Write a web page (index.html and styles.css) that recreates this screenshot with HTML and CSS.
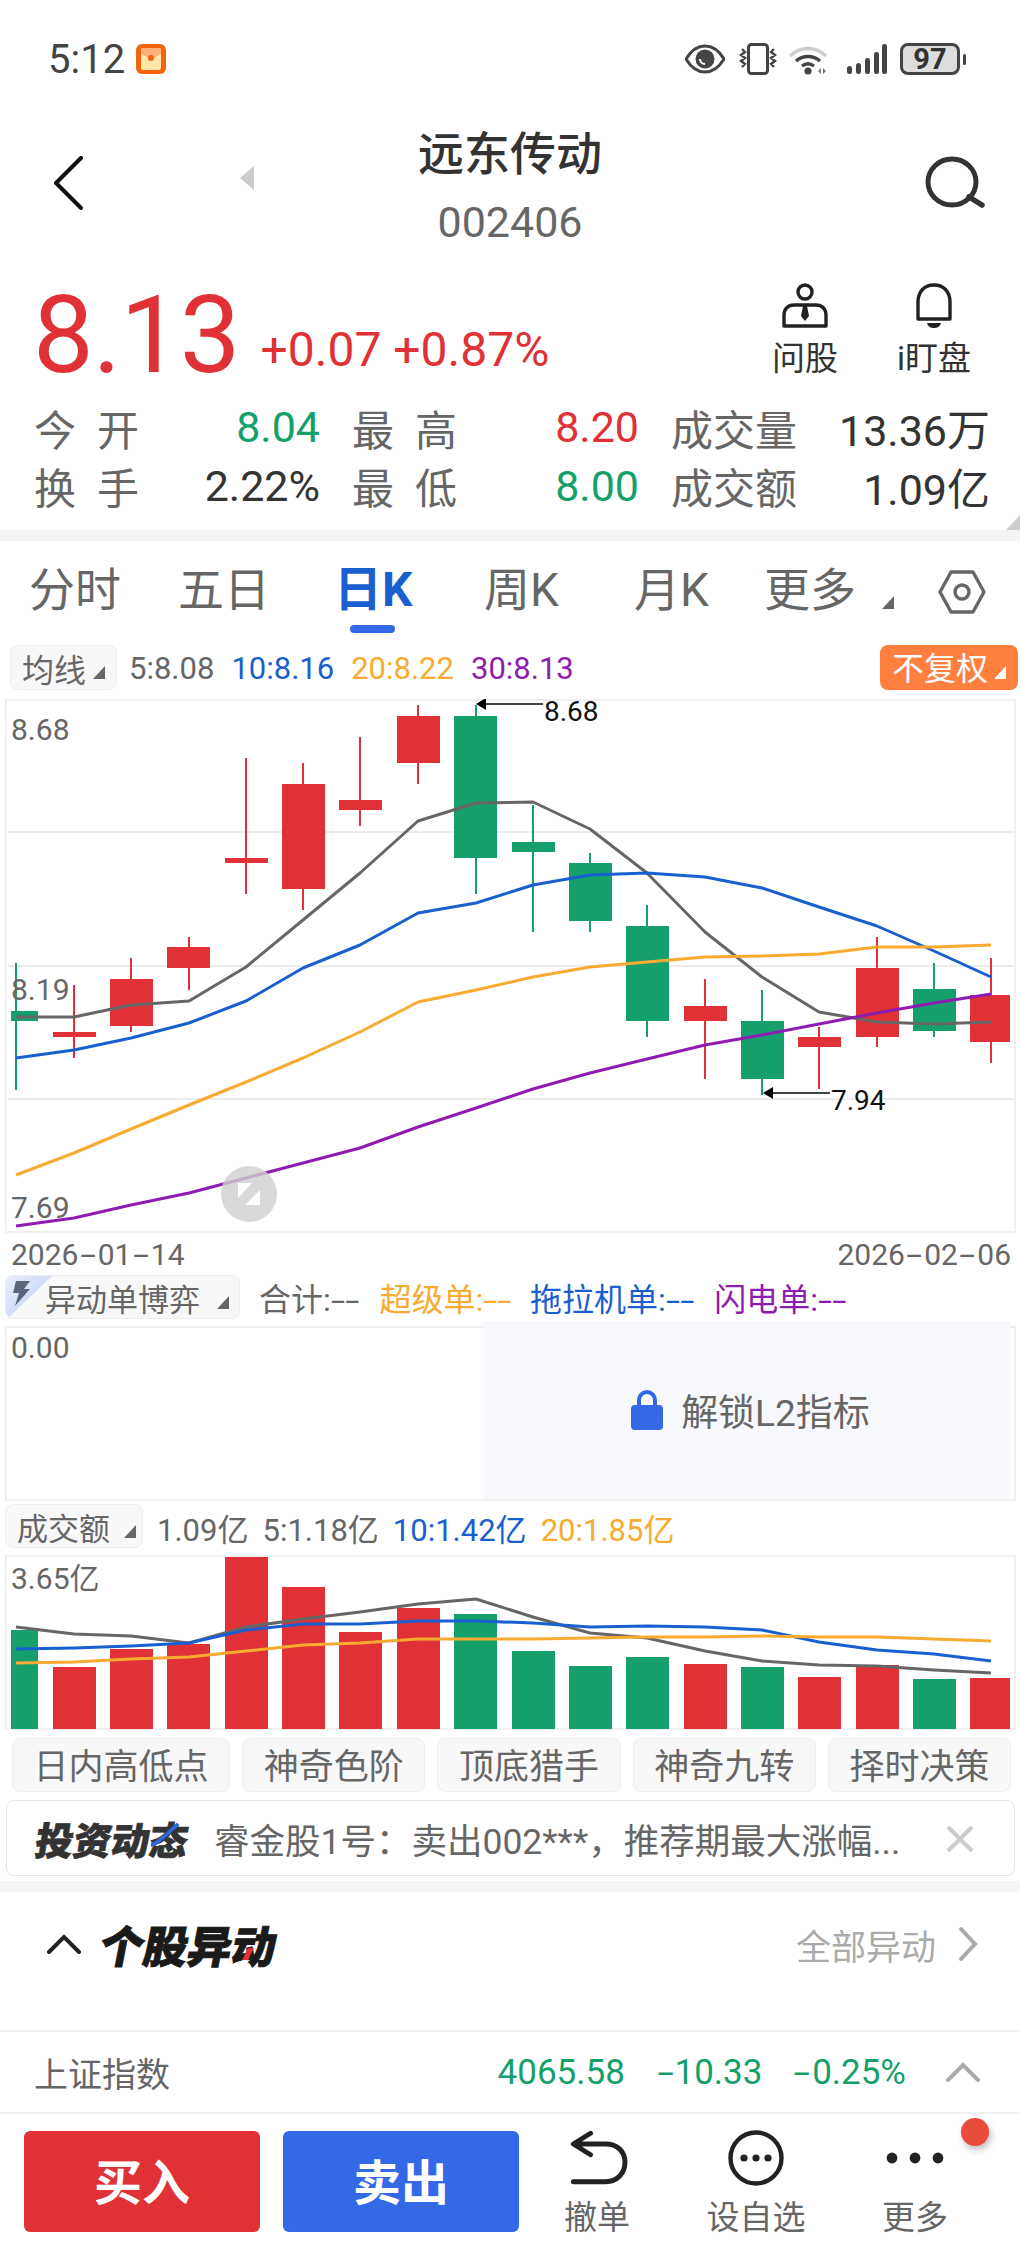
FILE: index.html
```html
<!DOCTYPE html>
<html lang="zh-CN">
<head>
<meta charset="utf-8">
<title>远东传动</title>
<link rel="stylesheet" href="styles.css">
</head>
<body>
<div class="page">
  <div class="status">
    <div class="status-left">
      <span class="clock">5:12</span>
      <svg class="envelope" viewBox="0 0 30 30"><rect width="30" height="30" rx="6" fill="#f7630c"/><rect x="5" y="4" width="20" height="22" rx="2" fill="#ffe6a8"/><path d="M5 10c5 2 8 5 10 5s5-3 10-5V6a2 2 0 0 0-2-2H7a2 2 0 0 0-2 2z" fill="#fbb27a"/><circle cx="15" cy="14" r="3" fill="#f7630c"/></svg>
    </div>
    <div class="status-right">
      <svg class="ic-eye" viewBox="0 0 40 30"><path d="M1 15C7 5 13 2 20 2s13 3 19 13c-6 10-12 13-19 13S7 25 1 15z" fill="none" stroke="#444" stroke-width="3"/><circle cx="20" cy="15" r="9.5" fill="#444"/><path d="M15 15a5 5 0 0 0 5 5" fill="none" stroke="#fff" stroke-width="2.2"/></svg>
      <svg class="ic-vib" viewBox="0 0 40 32"><rect x="10.5" y="1.5" width="19" height="29" rx="3" fill="none" stroke="#444" stroke-width="3"/><path d="M4 6l3 3-4 3 4 3-4 3 4 3-3 3M36 6l-3 3 4 3-4 3 4 3-4 3 3 3" fill="none" stroke="#444" stroke-width="2.4"/></svg>
      <svg class="ic-wifi" viewBox="0 0 40 32"><path d="M2 13C12 3 28 3 38 13" fill="none" stroke="#ccc" stroke-width="3.4"/><path d="M8 18c7-6 17-6 24 0M14 23c4-3 8-3 12 0" fill="none" stroke="#444" stroke-width="3.4"/><circle cx="20" cy="28" r="3.6" fill="#444"/><path d="M33 25l-3 3 3 3zM35 25l3 3-3 3z" fill="#777"/></svg>
      <svg class="ic-sig" viewBox="0 0 40 32"><rect x="0" y="23" width="5" height="8" rx="2.5" fill="#444"/><rect x="9" y="20" width="5" height="11" rx="2.5" fill="#444"/><rect x="18" y="15" width="5" height="16" rx="2.5" fill="#444"/><rect x="27" y="9" width="5" height="22" rx="2.5" fill="#444"/><rect x="35" y="1" width="5" height="30" rx="2.5" fill="#444"/></svg>
      <div class="battery"><span class="battery-num">97</span></div><i class="battery-tip"></i>
    </div>
  </div>

  <div class="header">
    <div class="header-left">
      <svg class="ic-back" viewBox="0 0 30 54"><path d="M28 2L3 27l25 25" fill="none" stroke="#111" stroke-width="4" stroke-linecap="round" stroke-linejoin="round"/></svg>
      <i class="prev-arrow"></i>
    </div>
    <div class="header-mid">
      <div class="stock-name">远东传动</div>
      <div class="stock-code">002406</div>
    </div>
    <div class="header-right">
      <svg class="ic-search" viewBox="0 0 60 52"><ellipse cx="27" cy="26" rx="24" ry="23" fill="none" stroke="#333" stroke-width="5"/><path d="M44 41l13 8" stroke="#333" stroke-width="5.5" stroke-linecap="round"/></svg>
    </div>
  </div>

  <div class="quote">
    <div class="price">8.13</div>
    <div class="change">+0.07 +0.87%</div>
    <div class="actions">
      <div class="action">
        <svg class="ic-action" viewBox="0 0 46 46"><circle cx="23" cy="9" r="7" fill="none" stroke="#222" stroke-width="3.4"/><path d="M2 43V32c0-6 4-10 10-10h22c6 0 10 4 10 10v11z" fill="none" stroke="#222" stroke-width="3.4" stroke-linejoin="round"/><path d="M21 23h4l2 10-4 5-4-5z" fill="#222"/></svg>
        <span class="action-label">问股</span>
      </div>
      <div class="action">
        <svg class="ic-action" viewBox="0 0 46 46"><path d="M7 36V19C7 9 13 2 23 2s16 7 16 17v17z" fill="none" stroke="#222" stroke-width="3.4" stroke-linejoin="round"/><path d="M16 40h14c-1 4-4 5-7 5s-6-1-7-5z" fill="#222"/></svg>
        <span class="action-label">i盯盘</span>
      </div>
    </div>
  </div>

  <div class="stats">
    <div class="stat"><span class="stat-label wide">今开</span><span class="num-green">8.04</span></div>
    <div class="stat"><span class="stat-label wide">最高</span><span class="num-red">8.20</span></div>
    <div class="stat"><span class="stat-label">成交量</span><span class="num-dark">13.36万</span></div>
    <div class="stat"><span class="stat-label wide">换手</span><span class="num-dark">2.22%</span></div>
    <div class="stat"><span class="stat-label wide">最低</span><span class="num-green">8.00</span></div>
    <div class="stat"><span class="stat-label">成交额</span><span class="num-dark">1.09亿</span></div>
    <i class="corner-mark"></i>
  </div>
  <div class="gap-bar"></div>

  <div class="tabs">
    <span class="tab">分时</span>
    <span class="tab">五日</span>
    <span class="tab tab-active">日K</span>
    <span class="tab">周K</span>
    <span class="tab">月K</span>
    <span class="tab tab-more">更多<i class="tri tri-big"></i></span>
    <svg class="ic-hex" viewBox="0 0 48 44"><path d="M13 2h22l11 20-11 20H13L2 22z" fill="none" stroke="#666" stroke-width="3.4" stroke-linejoin="round"/><circle cx="24" cy="22" r="7" fill="none" stroke="#666" stroke-width="3.4"/></svg>
  </div>

  <div class="ma-row">
    <span class="chip chip-ma">均线<i class="tri"></i></span>
    <span class="ma-text c-grey">5:8.08</span>
    <span class="ma-text c-blue">10:8.16</span>
    <span class="ma-text c-orange">20:8.22</span>
    <span class="ma-text c-purple">30:8.13</span>
    <span class="fq">不复权<i class="tri tri-white"></i></span>
  </div>

  <div class="chart-box">
    <svg class="chart-svg" viewBox="5 699 1011 534">
      <g class="grid"><path d="M8 832H1014M8 966H1014M8 1099H1014"/></g>
      <g class="up">
        <path d="M74 985V1058M131 958V1032M189 937V990M246 758V894M303 763V910M360 737V826M418 705V784M705 979V1079M819 1027V1089M877 937V1047M991 958V1063"/>
        <rect x="53" y="1032" width="43" height="5"/><rect x="110" y="979" width="43" height="47"/><rect x="167" y="947" width="43" height="21"/><rect x="225" y="858" width="43" height="5"/><rect x="282" y="784" width="43" height="105"/><rect x="339" y="800" width="43" height="10"/><rect x="397" y="716" width="43" height="47"/><rect x="684" y="1006" width="43" height="15"/><rect x="798" y="1037" width="43" height="10"/><rect x="856" y="968" width="43" height="69"/><rect x="970" y="995" width="40" height="47"/>
      </g>
      <g class="down">
        <path d="M16 963V1090M476 705V894M533 805V932M590 853V932M647 905V1037M762 990V1095M934 963V1037"/>
        <rect x="11" y="1011" width="27" height="10"/><rect x="454" y="716" width="43" height="142"/><rect x="512" y="842" width="43" height="10"/><rect x="569" y="863" width="43" height="58"/><rect x="626" y="926" width="43" height="95"/><rect x="741" y="1021" width="43" height="58"/><rect x="913" y="989" width="43" height="42"/>
      </g>
      <polyline class="l-grey" points="16,1017 74,1017 131,1005 189,1001 246,967 303,920 360,873 418,821 476,803 533,802 590,829 647,873 705,932 762,977 819,1012 877,1022 934,1024 991,1022"/>
      <polyline class="l-blue" points="16,1058 74,1050 131,1038 189,1023 246,1001 303,968 360,945 418,913 476,903 533,885 590,875 647,873 705,877 762,888 819,907 877,926 934,951 991,977"/>
      <polyline class="l-orange" points="16,1175 74,1153 131,1129 189,1105 246,1082 303,1058 360,1032 418,1002 476,990 533,977 590,967 647,962 705,957 762,956 819,954 877,947 934,947 991,945"/>
      <polyline class="l-purple" points="16,1226 74,1218 131,1205 189,1193 246,1178 303,1163 360,1148 418,1127 476,1108 533,1089 590,1073 647,1059 705,1045 762,1035 819,1024 877,1013 934,1003 991,994"/>
      <path class="note-line" d="M480 704H543M767 1093H830"/>
      <path class="note-head" d="M476 704l10-6v12zM763 1093l10-6v12z"/>
      <circle class="pencil-bg" cx="249" cy="1194" r="28"/>
      <path class="pencil" d="M238 1183h14l-14 15zM260 1190v15h-15z"/>
    </svg>
    <span class="axis-label lbl-top">8.68</span>
    <span class="axis-label lbl-mid">8.19</span>
    <span class="axis-label lbl-bot">7.69</span>
    <span class="note note-hi">8.68</span>
    <span class="note note-lo">7.94</span>
  </div>

  <div class="dates">
    <span>2026<b class="dash">-</b>01<b class="dash">-</b>14</span>
    <span>2026<b class="dash">-</b>02<b class="dash">-</b>06</span>
  </div>

  <div class="l2-row">
    <span class="chip chip-l2">
      <svg class="l2-flash" viewBox="0 0 46 44"><defs><linearGradient id="flashFill" x1="0" y1="0" x2="1" y2="1"><stop offset="0" stop-color="#e8effc"/><stop offset="1" stop-color="#b9ccf2"/></linearGradient></defs><path d="M0 0h46L0 44z" fill="url(#flashFill)"/><path d="M10 5h14l-6 8h6L9 30l4-13H7z" fill="#5c6678"/></svg>
      异动单博弈<i class="tri"></i>
    </span>
    <span class="l2-text lt-1 c-grey">合计:<b class="dashes">--</b></span>
    <span class="l2-text lt-2 c-orange">超级单:<b class="dashes">--</b></span>
    <span class="l2-text lt-3 c-blue">拖拉机单:<b class="dashes">--</b></span>
    <span class="l2-text lt-4 c-purple">闪电单:<b class="dashes">--</b></span>
  </div>

  <div class="l2-box">
    <span class="axis-label lbl-l2">0.00</span>
    <div class="l2-lock">
      <svg class="ic-lock" viewBox="0 0 32 40"><path d="M8 18V10a8 8 0 0 1 16 0v8" fill="none" stroke="#3369e7" stroke-width="4"/><rect y="15" width="32" height="25" rx="4" fill="#3369e7"/></svg>
      <span>解锁L2指标</span>
    </div>
  </div>

  <div class="vol-row">
    <span class="chip chip-vol">成交额<i class="tri"></i></span>
    <span class="ma-text c-grey">1.09亿</span>
    <span class="ma-text c-grey">5:1.18亿</span>
    <span class="ma-text c-blue">10:1.42亿</span>
    <span class="ma-text c-orange">20:1.85亿</span>
  </div>

  <div class="vol-box">
    <svg class="vol-svg" viewBox="5 1555 1011 175">
      <g class="up">
        <rect x="53" y="1667" width="43" height="62"/><rect x="110" y="1649" width="43" height="80"/><rect x="167" y="1644" width="43" height="85"/><rect x="225" y="1557" width="43" height="172"/><rect x="282" y="1587" width="43" height="142"/><rect x="339" y="1632" width="43" height="97"/><rect x="397" y="1608" width="43" height="121"/><rect x="684" y="1664" width="43" height="65"/><rect x="798" y="1677" width="43" height="52"/><rect x="856" y="1665" width="43" height="64"/><rect x="970" y="1678" width="40" height="51"/>
      </g>
      <g class="down">
        <rect x="11" y="1630" width="27" height="99"/><rect x="454" y="1614" width="43" height="115"/><rect x="512" y="1651" width="43" height="78"/><rect x="569" y="1666" width="43" height="63"/><rect x="626" y="1657" width="43" height="72"/><rect x="741" y="1667" width="43" height="62"/><rect x="913" y="1679" width="43" height="50"/>
      </g>
      <polyline class="l-grey" points="16,1627 74,1634 131,1636 189,1643 246,1627 303,1619 360,1612 418,1604 476,1599 533,1617 590,1633 647,1638 705,1651 762,1661 819,1665 877,1666 934,1670 991,1673"/>
      <polyline class="l-blue" points="16,1649 74,1648 131,1646 189,1643 246,1630 303,1624 360,1624 418,1621 476,1621 533,1623 590,1627 647,1626 705,1627 762,1630 819,1642 877,1650 934,1654 991,1661"/>
      <polyline class="l-orange" points="16,1663 74,1662 131,1659 189,1657 246,1651 303,1645 360,1643 418,1639 476,1639 533,1639 590,1638 647,1637 705,1637 762,1636 819,1637 877,1637 934,1639 991,1641"/>
    </svg>
    <span class="axis-label lbl-vol">3.65亿</span>
  </div>

  <div class="tools">
    <span class="tool tool-wide">日内高低点</span>
    <span class="tool">神奇色阶</span>
    <span class="tool">顶底猎手</span>
    <span class="tool">神奇九转</span>
    <span class="tool">择时决策</span>
  </div>

  <div class="news">
    <span class="news-logo">投资动态<svg class="news-accent" viewBox="0 0 28 24"><path d="M2 22C10 20 16 10 26 1" fill="none" stroke="#2f66e0" stroke-width="4"/></svg></span>
    <span class="news-text">睿金股1号：卖出002***，推荐期最大涨幅...</span>
    <svg class="ic-close" viewBox="0 0 30 30"><path d="M3 3l24 24M27 3L3 27" stroke="#ccc" stroke-width="4"/></svg>
  </div>
  <div class="gap-bar gap-bar-2"></div>

  <div class="section">
    <svg class="ic-up-dark" viewBox="0 0 34 20"><path d="M2 18L17 3l15 15" fill="none" stroke="#222" stroke-width="4" stroke-linecap="round"/></svg>
    <span class="section-title">个股异动<i class="title-accent"></i></span>
    <span class="section-link">全部异动</span>
    <svg class="ic-right" viewBox="0 0 20 36"><path d="M3 3l14 15L3 33" fill="none" stroke="#aaa" stroke-width="4" stroke-linecap="round"/></svg>
  </div>

  <div class="index-row">
    <span class="index-name">上证指数</span>
    <span class="index-val v1">4065.58</span>
    <span class="index-val v2"><b class="dash-lead dash-lead-a">-</b>10.33</span>
    <span class="index-val v3"><b class="dash-lead">-</b>0.25%</span>
    <svg class="ic-up-grey" viewBox="0 0 34 20"><path d="M2 18L17 3l15 15" fill="none" stroke="#aaa" stroke-width="4" stroke-linecap="round"/></svg>
  </div>

  <div class="bottom">
    <span class="trade trade-buy">买入</span>
    <span class="trade trade-sell">卖出</span>
    <div class="bottom-item">
      <svg class="ic-bottom ic-undo" viewBox="0 0 56 52"><path d="M20 3L4 13l16 10M6 13h28c11 0 18 7 18 17s-7 18-18 18H4" fill="none" stroke="#222" stroke-width="4.6" stroke-linecap="round" stroke-linejoin="round"/></svg>
      <span>撤单</span>
    </div>
    <div class="bottom-item">
      <svg class="ic-bottom" viewBox="0 0 56 56"><circle cx="28" cy="28" r="25.5" fill="none" stroke="#222" stroke-width="4.4"/><circle cx="16" cy="28" r="3.6" fill="#222"/><circle cx="28" cy="28" r="3.6" fill="#222"/><circle cx="40" cy="28" r="3.6" fill="#222"/></svg>
      <span>设自选</span>
    </div>
    <div class="bottom-item">
      <svg class="ic-bottom" viewBox="0 0 58 56"><circle cx="6" cy="28" r="5.4" fill="#222"/><circle cx="29" cy="28" r="5.4" fill="#222"/><circle cx="52" cy="28" r="5.4" fill="#222"/></svg>
      <span>更多</span>
    </div>
    <i class="red-dot"></i>
  </div>
</div>
</body>
</html>
```
FILE: styles.css
```css
* { box-sizing: border-box; }
html, body { margin: 0; padding: 0; background: #fff; }
body { font-family: Roboto, "Noto Sans CJK SC", sans-serif; color: #666; }
i { display: block; font-style: normal; }
b { font-weight: inherit; }
svg { display: block; flex: none; }
.page { width: 1020px; height: 2250px; overflow: hidden; position: relative; }

.c-grey { color: #666; }
.c-blue { color: #1a5fd0; }
.c-orange { color: #f8ab30; }
.c-purple { color: #8e1cb0; }
.dash { display: inline-block; margin: 0 5.5px; transform: scaleX(1.9); }
.dash-lead { display: inline-block; margin: 0 5px; transform: scaleX(1.7); }
.dash-lead-a { margin: 0 4px 0 3px; }
.dashes { display: inline-block; margin-right: 11px; transform: scaleX(1.6); transform-origin: left center; }

.status { height: 118px; padding: 0 54px 0 48px; display: flex; justify-content: space-between; align-items: center; }
.status-left { display: flex; align-items: center; gap: 11px; }
.clock { font-size: 40px; color: #444; }
.envelope { width: 30px; height: 30px; }
.status-right { display: flex; align-items: center; }
.ic-eye { width: 40px; height: 30px; }
.ic-vib { width: 40px; height: 32px; margin-left: 13px; }
.ic-wifi { width: 40px; height: 32px; margin-left: 10px; }
.ic-sig { width: 40px; height: 32px; margin-left: 19px; }
.battery { width: 60px; height: 32px; margin-left: 13px; background: #ddd; border: 3px solid #444; border-radius: 8px; display: flex; align-items: center; justify-content: center; }
.battery-num { font-size: 29px; font-weight: 700; color: #333; line-height: 1; }
.battery-tip { width: 3px; height: 11px; margin-left: 3px; background: #444; border-radius: 2px; }

.header { height: 154px; padding: 0 35px; display: grid; grid-template-columns: 1fr auto 1fr; }
.header-left { display: flex; align-items: flex-start; padding: 38px 0 0 18px; }
.ic-back { width: 30px; height: 54px; }
.prev-arrow { width: 0; height: 0; margin: 10px 0 0 157px; border-right: 14px solid #ccc; border-top: 12px solid transparent; border-bottom: 12px solid transparent; }
.header-mid { text-align: center; padding-top: 9px; }
.stock-name { font-size: 46px; line-height: 54px; font-weight: 500; color: #333; }
.stock-code { font-size: 43px; line-height: 50px; margin-top: 16px; color: #666; }
.header-right { display: flex; justify-content: flex-end; padding-top: 38px; }
.ic-search { width: 60px; height: 52px; }

.quote { height: 120px; padding: 3px 0 0 33px; display: flex; align-items: flex-start; position: relative; }
.price { font-size: 108px; line-height: 120px; color: #e03137; letter-spacing: -1px; }
.change { font-size: 48px; line-height: 60px; margin: 45px 0 0 21px; color: #e03137; }
.actions { position: absolute; right: 49px; top: 11px; display: flex; gap: 55px; align-items: flex-start; }
.action { width: 74px; display: flex; flex-direction: column; align-items: center; }
.ic-action { width: 46px; height: 46px; }
.action-label { font-size: 33px; line-height: 40px; margin-top: 10px; color: #333; white-space: nowrap; }

.stats { height: 138px; padding: 6px 30px 0 34px; display: grid; grid-template-columns: 286px 287px 319px; column-gap: 32px; grid-auto-rows: 58.5px; position: relative; font-size: 42px; }
.stat { display: flex; justify-content: space-between; align-items: center; }
.stat-label { color: #666; }
.stat-label.wide { letter-spacing: 21px; }
.stat span:last-child { font-size: 43px; }
.num-green { color: #149f6b; }
.num-red { color: #e03137; }
.num-dark { color: #333; }
.corner-mark { position: absolute; right: 0; bottom: 0; width: 0; height: 0; border-left: 14px solid transparent; border-bottom: 15px solid #ccc; }
.gap-bar { height: 11px; background: #f4f4f4; }

.tabs { height: 104px; position: relative; display: flex; align-items: center; font-size: 46px; color: #666; }
.tab { position: absolute; top: 22px; line-height: 54px; white-space: nowrap; }
.tab:nth-child(1) { left: 29px; }
.tab:nth-child(2) { left: 178px; }
.tab:nth-child(3) { left: 334px; font-size: 48px; }
.tab:nth-child(4) { left: 484px; }
.tab:nth-child(5) { left: 634px; }
.tab:nth-child(6) { left: 764px; }
.tab-active { color: #1a5fd0; font-weight: 700; }
.tab-active::after { content: ""; position: absolute; left: 16px; top: 62px; width: 45px; height: 8px; border-radius: 4px; background: #3369e7; }
.tab-more { display: flex; align-items: flex-end; }
.tri { width: 0; height: 0; margin-left: 8px; border-left: 12px solid transparent; border-bottom: 13px solid #666; }
.tri-big { margin: 0 0 8px 26px; }
.ic-hex { position: absolute; left: 938px; top: 29px; width: 48px; height: 44px; }

.ma-row { height: 54px; padding: 0 2px 9px 10px; display: flex; align-items: center; font-size: 31px; }
.chip { display: inline-flex; align-items: center; background: #f8f8f8; border: 1px solid #eee; border-radius: 8px; color: #666; }
.chip-ma { width: 107px; height: 45px; padding-left: 11px; font-size: 32px; flex: none; }
.chip-ma .tri { margin-left: 7px; margin-top: 10px; }
.ma-text { white-space: nowrap; margin-right: 17px; position: relative; top: 1px; }
.chip-ma + .ma-text { margin-left: 12px; }
.fq { margin-left: auto; width: 138px; height: 45px; background: #ff7f3f; color: #fff; border-radius: 8px; display: flex; align-items: center; padding: 0 0 4px 12px; font-size: 32px; }
.tri-white { border-bottom-color: #fff; margin-top: 14px; margin-left: 6px; }

.chart-box { margin-left: 5px; width: 1011px; height: 534px; border: 2px solid #f0f0f0; position: relative; }
.chart-svg { position: absolute; left: -2px; top: -2px; width: 1011px; height: 534px; }
.grid path { stroke: #ececec; stroke-width: 2; fill: none; }
.up path { stroke: #e03137; stroke-width: 2; fill: none; }
.down path { stroke: #149f6b; stroke-width: 2; fill: none; }
.up rect { fill: #e03137; }
.down rect { fill: #149f6b; }
polyline { fill: none; stroke-width: 3; stroke-linejoin: round; }
.l-grey { stroke: #666; }
.l-blue { stroke: #1a5fd0; }
.l-orange { stroke: #f8ab30; }
.l-purple { stroke: #8e1cb0; }
.note-line { stroke: #444; stroke-width: 2; fill: none; }
.note-head { fill: #000; }
.pencil-bg { fill: #cfcfcf; fill-opacity: .8; }
.pencil { fill: #fff; }
.axis-label { position: absolute; left: 4px; font-size: 30px; line-height: 36px; color: #666; white-space: nowrap; }
.lbl-top { top: 11px; }
.lbl-mid { top: 271px; }
.lbl-bot { top: 489px; }
.note { position: absolute; font-size: 28px; line-height: 32px; color: #111; }
.note-hi { left: 537px; top: -5px; }
.note-lo { left: 824px; top: 384px; }

.dates { height: 42px; padding: 0 9px 0 11px; display: flex; justify-content: space-between; align-items: center; font-size: 30px; color: #666; }

.l2-row { height: 51px; padding: 0 0 7px 5px; display: flex; align-items: center; font-size: 32px; position: relative; }
.chip-l2 { width: 235px; height: 44px; padding-left: 39px; font-size: 31px; flex: none; position: relative; overflow: hidden; }
.chip-l2 .tri { margin-left: 17px; margin-top: 10px; }
.l2-flash { position: absolute; left: 0; top: 0; width: 46px; height: 44px; }
.l2-text { white-space: nowrap; }
.lt-1 { margin-left: 19px; }
.lt-2 { margin-left: 20px; }
.lt-3 { margin-left: 18px; }
.lt-4 { margin-left: 20px; }

.l2-box { margin-left: 5px; width: 1011px; height: 175px; border: 2px solid #f0f0f0; position: relative; }
.lbl-l2 { top: 2px; }
.l2-lock { position: absolute; left: 476px; top: -7px; right: 4px; bottom: 0; padding-left: 8px; background: #f7f9fd; display: flex; align-items: center; justify-content: center; gap: 18px; font-size: 37px; color: #666; }
.ic-lock { width: 32px; height: 40px; }

.vol-row { height: 54px; padding: 3px 0 7px 5px; display: flex; align-items: center; font-size: 31px; }
.chip-vol { width: 138px; height: 44px; padding-left: 11px; font-size: 31px; flex: none; }
.chip-vol .tri { margin-left: 14px; margin-top: 10px; }
.vol-row .ma-text { margin-right: 14px; }
.chip-vol + .ma-text { margin-left: 14px; }

.vol-box { margin-left: 5px; width: 1011px; height: 175px; border: 2px solid #f0f0f0; position: relative; }
.vol-svg { position: absolute; left: -2px; top: -2px; width: 1011px; height: 175px; }
.lbl-vol { top: 4px; }

.tools { height: 70px; padding: 8px 9px 8px 12px; display: flex; gap: 12px; }
.tool { width: 184px; height: 54px; padding-bottom: 3px; background: #f8f8f8; border: 1px solid #eee; border-radius: 8px; font-size: 35px; display: flex; align-items: center; justify-content: center; color: #666; white-space: nowrap; }
.tool-wide { width: 219px; }

.news { margin-left: 6px; width: 1009px; height: 76px; border: 1px solid #e5e5e5; border-radius: 8px; display: flex; align-items: center; position: relative; }
.news-logo { display: inline-block; margin-left: 29px; font-size: 38px; font-weight: 900; color: #333; -webkit-text-stroke: .8px #333; transform: skewX(-9deg); position: relative; white-space: nowrap; }
.news-accent { position: absolute; left: 114px; top: 12px; width: 28px; height: 24px; }
.news-text { margin-left: 26px; font-size: 35.5px; color: #666; white-space: nowrap; }
.ic-close { position: absolute; left: 938px; top: 23px; width: 30px; height: 30px; }
.gap-bar-2 { margin-top: 5px; }

.section { height: 140px; padding: 0 42px 34px 47px; display: flex; align-items: center; border-bottom: 2px solid #f2f2f2; }
.ic-up-dark { width: 34px; height: 20px; }
.section-title { display: inline-block; margin-left: 20px; font-size: 44px; font-weight: 900; color: #1a1a1a; -webkit-text-stroke: 1px #1a1a1a; transform: skewX(-11deg); position: relative; white-space: nowrap; }
.title-accent { position: absolute; left: 146px; top: 36px; width: 6px; height: 12px; background: #e03137; transform: skewX(-15deg); }
.section-link { margin-left: auto; margin-right: -2px; font-size: 35px; color: #aaa; white-space: nowrap; }
.ic-right { width: 20px; height: 36px; margin-left: 24px; }

.index-row { height: 82px; padding: 0 40px 0 34px; display: flex; align-items: center; border-bottom: 2px solid #f2f2f2; font-size: 35px; }
.index-name { color: #666; font-size: 34px; }
.index-val { color: #149f6b; white-space: nowrap; }
.v1 { margin-left: auto; }
.v2 { margin-left: 33px; }
.v3 { margin-left: 30px; }
.ic-up-grey { width: 34px; height: 20px; margin-left: 40px; }

.bottom { height: 136px; padding: 17px 0 0 24px; display: flex; align-items: flex-start; position: relative; }
.trade { width: 236px; height: 101px; padding-bottom: 5px; border-radius: 6px; color: #fff; font-size: 48px; font-weight: 700; display: flex; align-items: center; justify-content: center; }
.trade-buy { background: #e03137; }
.trade-sell { background: #3369e7; margin-left: 23px; }
.bottom-item { position: absolute; top: 16px; display: flex; flex-direction: column; align-items: center; font-size: 33px; color: #666; white-space: nowrap; width: 120px; }
.bottom-item:nth-child(3) { left: 537px; }
.bottom-item:nth-child(4) { left: 696px; }
.bottom-item:nth-child(5) { left: 855px; }
.ic-bottom { height: 56px; }
.ic-undo { position: relative; left: 2px; }
.bottom-item span { margin-top: 12px; line-height: 40px; }
.red-dot { position: absolute; left: 961px; top: 4px; width: 28px; height: 28px; border-radius: 50%; background: #e74c3c; box-shadow: 2px 4px 6px rgba(0,0,0,.25); }
```
